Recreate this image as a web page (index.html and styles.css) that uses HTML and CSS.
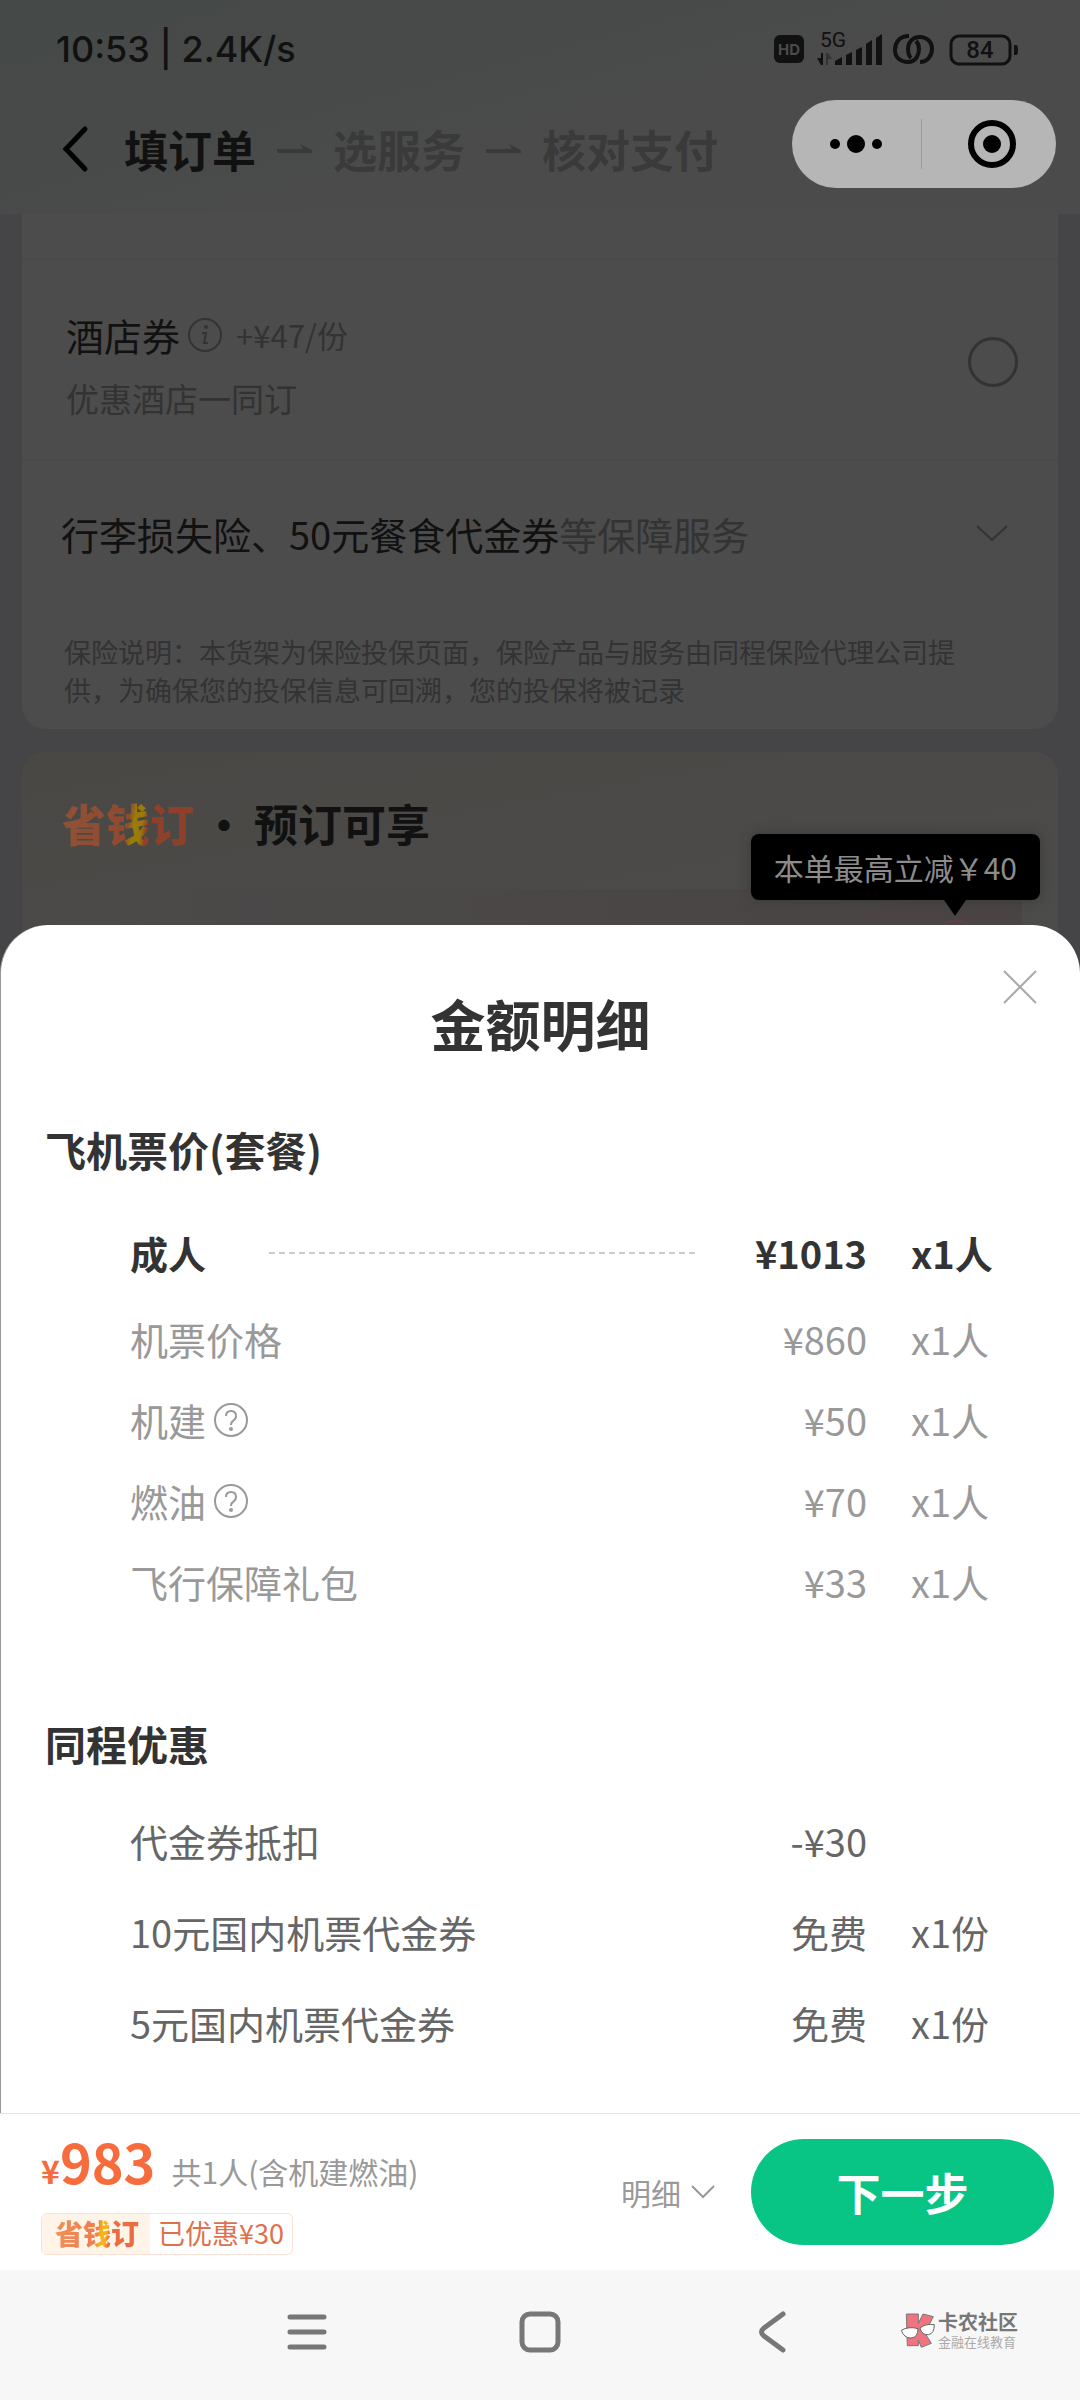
FILE: index.html
```html
<!DOCTYPE html>
<html lang="zh-CN">
<head>
    <meta charset="UTF-8">
    <meta name="viewport" content="width=device-width, initial-scale=1.0">
    <title>填订单</title>
    <link rel="stylesheet" href="styles.css">
</head>
<body>
    <div class="page">
        <header>
            <div class="status-bar">
                <span class="clock">10:53 | 2.4K/s</span>
                <svg class="status-icons" width="248" height="36" viewBox="0 0 248 36">
                    <rect x="2" y="4" width="30" height="28" rx="6" fill="#111"/>
                    <text x="17" y="24" class="hd" text-anchor="middle">HD</text>
                    <text x="48" y="16" class="net">5G</text>
                    <path d="M51 22v12h-2l-4-7h4v-5z" fill="#111"/>
                    <path d="M54 34V22h2l4 6h-4v6z" fill="#333"/>
                    <path d="M63 34v-4l7-4v8zM74 34V24l6-3v13zM84 34V19l6-3v18zM94 34V13l6-4v25zM104 34V7l6-4v31z" fill="#111"/>
                    <path d="M137 5C127 5 123 12 123 19C123 27 129 31 136 31C144 31 147 24 147 18C147 15 146 12 144 10M148 31C155 31 160 25 160 18C160 10 154 6 148 6C140 6 136 12 136 18C136 22 137 25 139 27" fill="none" stroke="#111" stroke-width="4"/>
                    <rect x="179" y="5" width="59" height="28" rx="8" fill="none" stroke="#111" stroke-width="3"/>
                    <path d="M242 14h2q2 0 2 5t-2 5h-2z" fill="#111"/>
                    <text x="208" y="27" class="battery" text-anchor="middle">84</text>
                </svg>
            </div>
            <nav class="steps">
                <button type="button" class="back" aria-label="返回">
                    <svg width="28" height="48" viewBox="0 0 28 48"><path d="M24 4L5 24l19 20" fill="none" stroke="#000" stroke-width="5" stroke-linecap="round"/></svg>
                </button>
                <span class="step active">填订单</span>
                <svg width="35" height="10" viewBox="0 0 35 10"><path d="M0 5h26l-3-5 12 6v3H0z" fill="#3a3a3a"/></svg>
                <span class="step">选服务</span>
                <svg width="35" height="10" viewBox="0 0 35 10"><path d="M0 5h26l-3-5 12 6v3H0z" fill="#3a3a3a"/></svg>
                <span class="step">核对支付</span>
            </nav>
            <!-- 小程序胶囊按钮 -->
            <div class="capsule">
                <button type="button" aria-label="更多">
                    <svg width="54" height="20" viewBox="0 0 54 20"><circle cx="6" cy="10" r="5"/><circle cx="27" cy="10" r="9"/><circle cx="48" cy="10" r="5"/></svg>
                </button>
                <button type="button" aria-label="关闭小程序">
                    <svg width="50" height="50" viewBox="0 0 50 50"><circle cx="25" cy="25" r="21" fill="none" stroke="#000" stroke-width="6"/><circle cx="25" cy="25" r="9"/></svg>
                </button>
            </div>
        </header>

        <section class="card services">
            <div class="hotel">
                <div class="hotel-text">
                    <label for="hotel" class="hotel-name">酒店券
                        <svg width="34" height="34" viewBox="0 0 34 34"><circle cx="17" cy="17" r="16" fill="none" stroke="#333" stroke-width="2"/><circle cx="18" cy="9" r="2" fill="#333"/><path d="M14 15h4l-2 10h4" fill="none" stroke="#333" stroke-width="2"/></svg>
                        <span class="hotel-price">+¥47/份</span>
                    </label>
                    <p>优惠酒店一同订</p>
                </div>
                <input type="radio" id="hotel" name="hotel">
            </div>
            <div class="more">
                <span>行李损失险、50元餐食代金券<em>等保障服务</em></span>
                <svg width="32" height="18" viewBox="0 0 32 18"><path d="M1 2l15 14L31 2" fill="none" stroke="#333" stroke-width="2"/></svg>
            </div>
            <p class="note">保险说明：本货架为保险投保页面，保险产品与服务由同程保险代理公司提供，为确保您的投保信息可回溯，您的投保将被记录</p>
        </section>

        <section class="card promo">
            <h2><span class="saver">省钱订</span><span class="dot">·</span>预订可享</h2>
            <div class="promo-box"><span class="promo-ring"></span></div>
            <div class="tooltip">本单最高立减￥40</div>
        </section>
    </div>

    <section class="sheet" role="dialog" aria-labelledby="sheet-title">
        <h1 id="sheet-title">金额明细</h1>
        <button type="button" class="close" aria-label="关闭">
            <svg width="34" height="34" viewBox="0 0 34 34"><path d="M1 1l32 32M33 1L1 33" stroke="#aaa" stroke-width="2"/></svg>
        </button>

        <h2>飞机票价(套餐)</h2>
        <table class="fare">
            <tr class="total">
                <td><div class="leader">成人</div></td>
                <td class="price">¥1013</td>
                <td class="count">x1人</td>
            </tr>
            <tr>
                <td>机票价格</td>
                <td class="price">¥860</td>
                <td class="count">x1人</td>
            </tr>
            <tr>
                <td><div class="tip">机建<svg width="36" height="36" viewBox="0 0 36 36"><circle cx="18" cy="18" r="16" fill="none" stroke="#999" stroke-width="2"/><path d="M13 14q0-5 5-5t5 5q0 3-3 5q-2 1-2 4" fill="none" stroke="#999" stroke-width="2"/><circle cx="18" cy="27" r="2" fill="#999"/></svg></div></td>
                <td class="price">¥50</td>
                <td class="count">x1人</td>
            </tr>
            <tr>
                <td><div class="tip">燃油<svg width="36" height="36" viewBox="0 0 36 36"><circle cx="18" cy="18" r="16" fill="none" stroke="#999" stroke-width="2"/><path d="M13 14q0-5 5-5t5 5q0 3-3 5q-2 1-2 4" fill="none" stroke="#999" stroke-width="2"/><circle cx="18" cy="27" r="2" fill="#999"/></svg></div></td>
                <td class="price">¥70</td>
                <td class="count">x1人</td>
            </tr>
            <tr>
                <td>飞行保障礼包</td>
                <td class="price">¥33</td>
                <td class="count">x1人</td>
            </tr>
        </table>

        <h2>同程优惠</h2>
        <table class="discount">
            <tr>
                <td>代金券抵扣</td>
                <td class="price">-¥30</td>
                <td class="count"></td>
            </tr>
            <tr>
                <td>10元国内机票代金券</td>
                <td class="price">免费</td>
                <td class="count">x1份</td>
            </tr>
            <tr>
                <td>5元国内机票代金券</td>
                <td class="price">免费</td>
                <td class="count">x1份</td>
            </tr>
        </table>
    </section>

    <footer class="pay-bar">
        <div class="sum">
            <div class="sum-line">
                <span class="amount"><small>¥</small>983</span>
                <span class="people">共1人(含机建燃油)</span>
            </div>
            <div class="badge"><span class="badge-tag"><span class="saver">省钱订</span></span><span class="badge-text">已优惠¥30</span></div>
        </div>
        <button type="button" class="detail">明细
            <svg width="24" height="14" viewBox="0 0 24 14"><path d="M1 1l11 11L23 1" fill="none" stroke="#999" stroke-width="2"/></svg>
        </button>
        <button type="button" class="next">下一步</button>
    </footer>

    <div class="system-nav">
        <svg width="42" height="42" viewBox="0 0 42 42"><path d="M4 6h34M4 21h34M4 36h34" stroke="#777" stroke-width="5" stroke-linecap="round"/></svg>
        <svg width="42" height="42" viewBox="0 0 42 42"><rect x="3" y="3" width="36" height="36" rx="8" fill="none" stroke="#777" stroke-width="5"/></svg>
        <svg width="42" height="42" viewBox="0 0 42 42"><path d="M31 3L12 17q-5 4 0 8l19 14" fill="none" stroke="#777" stroke-width="5" stroke-linecap="round"/></svg>
        <div class="watermark">
            <svg width="36" height="36" viewBox="58 66 108 108">
                <path d="M77 72h36v28l14-28 31 8-18 34-12 8 24 38-30 12-9-22v17H80z" fill="#ef7480" stroke="#777" stroke-width="3"/>
                <path d="M62 121q22-13 50-5q0 28-22 28q-20 0-28-23zM118 114q18-14 43-10q0 26-17 30q-20 3-26-20z" fill="#fff" stroke="#666" stroke-width="3"/>
            </svg>
            <div class="watermark-text">
                <b>卡农社区</b>
                <span>金融在线教育</span>
            </div>
        </div>
    </div>
</body>
</html>
```

FILE: styles.css
```css
* {
    box-sizing: border-box;
}

body {
    margin: 0;
    min-height: 100vh;
    display: flex;
    flex-direction: column;
    font-family: "Noto Sans CJK SC", sans-serif;
    font-size: 38px;
    color: #333;
    background: #fff;
}

h1, h2, p {
    margin: 0;
}

button {
    padding: 0;
    border: 0;
    background: none;
    font-family: inherit;
    color: inherit;
    display: flex;
    align-items: center;
    justify-content: center;
}

svg {
    display: block;
    flex: none;
}

/* 遮罩下的订单页 */
.page {
    background: #454548;
    color: #111;
}

header {
    position: relative;
    height: 214px;
    background: linear-gradient(165deg, #454947 0%, #474a49 30%, #4b4b4b 60%);
}

.status-bar {
    display: flex;
    justify-content: space-between;
    align-items: center;
    height: 98px;
    padding: 0 60px 0 56px;
}

.clock {
    font-family: Inter, sans-serif;
    font-size: 36px;
    font-weight: 500;
}

.hd {
    font: 700 15px Inter, sans-serif;
    fill: #4b4b4b;
}

.net {
    font: 400 21px Roboto, sans-serif;
    fill: #111;
}

.battery {
    font: 500 24px Roboto, sans-serif;
    fill: #111;
}

.steps {
    display: flex;
    align-items: center;
    height: 102px;
    padding-left: 61px;
    gap: 21px;
}

.back {
    margin-right: 14px;
}

.step {
    font-size: 44px;
    line-height: 60px;
    font-weight: 700;
    color: #3a3a3a;
}

.step.active {
    color: #111;
}

.capsule {
    position: absolute;
    top: 100px;
    right: 24px;
    width: 264px;
    height: 88px;
    border-radius: 44px;
    background: #b6b6b6;
    display: flex;
    align-items: center;
}

.capsule button {
    flex: 1;
    height: 50px;
}

.capsule button + button {
    padding-left: 6px;
    border-left: 1px solid #999;
}

.card {
    margin: 0 22px;
    background: #4c4c4c;
}

.services {
    padding-top: 44px;
    border-radius: 0 0 24px 24px;
}

.hotel {
    display: flex;
    justify-content: space-between;
    padding: 50px 40px 38px 44px;
    border-top: 2px solid #4a4a4a;
    border-bottom: 2px solid #4a4a4a;
}

.hotel-name {
    display: flex;
    align-items: center;
    gap: 8px;
    line-height: 50px;
}

.hotel-price {
    margin-left: 6px;
    font-size: 31px;
    color: #333;
}

.hotel p {
    margin-top: 15px;
    font-size: 33px;
    line-height: 46px;
    color: #333;
}

.hotel input {
    appearance: none;
    width: 50px;
    height: 50px;
    margin: 27px 0 0;
    border: 3px solid #333;
    border-radius: 50%;
}

.more {
    display: flex;
    justify-content: space-between;
    align-items: center;
    height: 144px;
    padding: 0 50px 0 39px;
}

.more em {
    font-style: normal;
    color: #333;
}

.note {
    padding: 28px 84px 20px 42px;
    font-size: 27px;
    line-height: 38px;
    color: #333;
}

.promo {
    position: relative;
    margin-top: 23px;
    padding: 45px 36px 0 40px;
    border-radius: 24px 24px 0 0;
    background: linear-gradient(170deg, #4a4845 0%, #4b4a48 50%, #4c4c4c 100%);
}

.promo h2 {
    display: flex;
    font-size: 44px;
    line-height: 52px;
}

.saver {
    font-weight: 900;
    color: transparent;
    background: linear-gradient(100deg, #f0925a 0%, #ee7c4e 50%, #f5b31c 54%, #f5b31c 60%, #ec6c42 64%, #ec6c42 100%);
    background-clip: text;
    -webkit-background-clip: text;
}

.promo .saver {
    background-image: linear-gradient(100deg, #8f5236 0%, #8f4a30 50%, #9a7a08 54%, #9a7a08 60%, #8f4028 64%, #8f4028 100%);
}

.dot {
    width: 60px;
    text-align: center;
}

.promo-box {
    height: 100px;
    margin-top: 40px;
    padding-top: 30px;
    border-radius: 16px 16px 0 0;
    background: linear-gradient(90deg, #4b4a49, #4a4444);
}

.promo-ring {
    display: block;
    width: 34px;
    height: 34px;
    margin: 0 49px 0 auto;
    border: 3px solid #5a4242;
    border-radius: 50%;
}

.tooltip {
    position: absolute;
    top: 82px;
    right: 18px;
    padding: 0 23px;
    font-size: 30px;
    line-height: 66px;
    border-radius: 8px;
    color: #8c8c8c;
    background: #000;
    box-shadow: 0 0 12px #3a3a3a;
}

.tooltip::after {
    content: "";
    position: absolute;
    top: 66px;
    right: 74px;
    border: 11px solid transparent;
    border-top: 16px solid #000;
    border-bottom: 0;
}

/* 金额明细弹层 */
.sheet {
    position: relative;
    flex: 1;
    margin-top: -64px;
    padding: 64px 0 40px;
    border-left: 1px solid #999;
    border-radius: 48px 48px 0 0;
    background: #fff;
}

.sheet h1 {
    font-size: 55px;
    line-height: 66px;
    text-align: center;
}

.close {
    position: absolute;
    top: 45px;
    right: 43px;
}

.sheet h2 {
    margin: 69px 0 0 44px;
    font-size: 41px;
    line-height: 50px;
}

table {
    width: calc(100% - 189px);
    margin-left: 129px;
    border-collapse: collapse;
    table-layout: fixed;
}

td {
    padding: 0;
    height: 81px;
}

.price {
    width: 214px;
    padding-right: 44px;
    text-align: right;
}

.count {
    width: 109px;
}

.fare {
    margin-top: 33px;
    color: #999;
}

.total {
    font-weight: 700;
    color: #333;
}

.total td {
    height: 91px;
}

.leader {
    display: flex;
    align-items: center;
    gap: 63px;
}

.leader::after {
    content: "";
    flex: 1;
    height: 2px;
    background: repeating-linear-gradient(90deg, #ccc 0 6px, transparent 6px 10px);
}

.tip {
    display: flex;
    align-items: center;
    gap: 7px;
}

.fare + h2 {
    margin-top: 96px;
}

.discount {
    margin-top: 27px;
    color: #666;
}

.discount td {
    height: 91px;
}

/* 底部支付栏 */
.pay-bar {
    display: flex;
    align-items: center;
    height: 157px;
    padding: 0 26px 0 41px;
    border-top: 1px solid #e4e4e4;
    background: #fff;
}

.sum {
    flex: 1;
}

.sum-line {
    display: flex;
    align-items: baseline;
    gap: 16px;
    line-height: 64px;
}

.amount {
    font-size: 54px;
    font-weight: 700;
    color: #f76b3c;
}

.amount small {
    font-size: 32px;
}

.people {
    font-size: 30px;
    color: #999;
}

.badge {
    display: flex;
    width: max-content;
    height: 42px;
    margin-top: 10px;
    border: 1px solid #fbe0d6;
    border-radius: 6px;
    line-height: 38px;
    overflow: hidden;
}

.badge-tag {
    padding: 0 11px 0 13px;
    font-size: 28px;
    background: #fef4e8;
}

.badge-text {
    padding: 0 8px;
    font-size: 27px;
    color: #e0704c;
}

.detail {
    gap: 10px;
    margin-right: 36px;
    font-size: 30px;
    color: #999;
}

.next {
    width: 303px;
    height: 106px;
    border-radius: 53px;
    font-size: 44px;
    font-weight: 700;
    color: #fff;
    background: #08c585;
}

.system-nav {
    position: relative;
    display: flex;
    justify-content: center;
    gap: 191px;
    height: 130px;
    padding-top: 41px;
    background: #f7f7f7;
}

.watermark {
    position: absolute;
    top: 42px;
    right: 62px;
    display: flex;
    gap: 2px;
    color: #777;
}

.watermark-text {
    display: flex;
    flex-direction: column;
}

.watermark b {
    font-size: 20px;
    line-height: 20px;
}

.watermark span {
    font-size: 13px;
    line-height: 20px;
    color: #aaa;
}
```
